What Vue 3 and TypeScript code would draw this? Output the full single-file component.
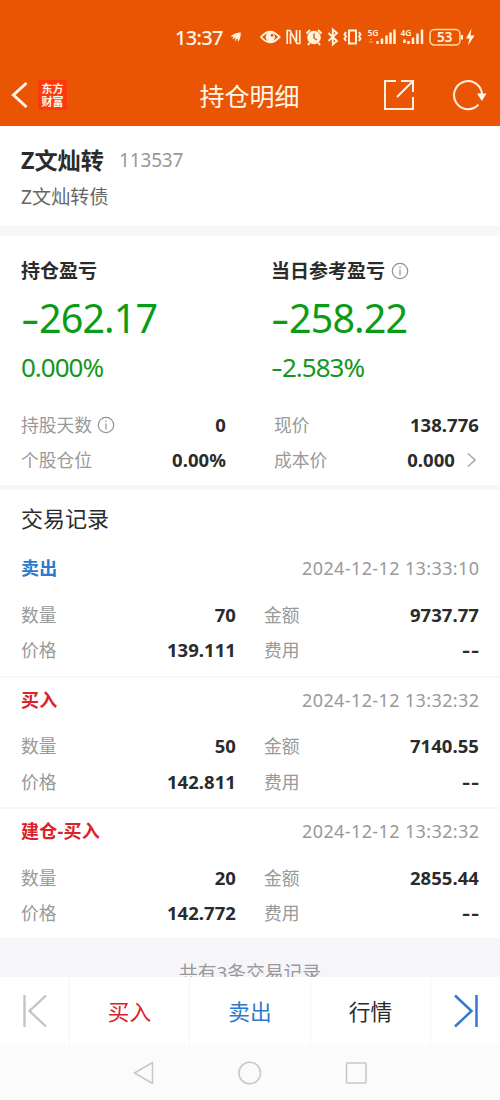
<script setup lang="ts">
interface TradeRecord {
  kind: string
  side: 'buy' | 'sell'
  time: string
  quantity: string
  amount: string
  price: string
}

const records: TradeRecord[] = [
  { kind: '卖出', side: 'sell', time: '2024-12-12 13:33:10', quantity: '70', amount: '9737.77', price: '139.111' },
  { kind: '买入', side: 'buy', time: '2024-12-12 13:32:32', quantity: '50', amount: '7140.55', price: '142.811' },
  { kind: '建仓-买入', side: 'buy', time: '2024-12-12 13:32:32', quantity: '20', amount: '2855.44', price: '142.772' },
]
</script>

<template>
  <div class="screen">
    <header class="top">
      <div class="status">
        <span class="clock">13:37</span>
        <svg class="status-icons" width="250" height="24" viewBox="230 25 250 24" fill="none" stroke="#fff3dc" stroke-width="1.6">
          <path d="M230.500 36.500Q235 32.500 240.800 32.500Q241 38 238 42L237.500 38 235 41.500 235.500 37.500 232.500 39.500 233.500 36.800Z" fill="#fff3dc" stroke="none" />
          <path d="M261 37Q270 26.500 279.500 37Q270 47.500 261 37Z" stroke-width="1.9" />
          <circle cx="270.300" cy="37" r="4.700" fill="#fff3dc" stroke="none" />
          <circle cx="272" cy="35.300" r="1.400" fill="#ea5504" stroke="none" />
          <path d="M287.200 44V30.500M290.500 44V33M296.500 30V41M299.800 30V43.500M286.300 30.500H290L297 43.500H300.500" stroke-width="1.700" />
          <circle cx="314" cy="37.500" r="6.800" fill="#fff3dc" stroke="none" />
          <path d="M306.500 33.500 310 30M321.500 33.500 318 30M309.500 43 308 45M318.500 43 320 45" stroke-width="2" />
          <path d="M314 33.500V38L317 40" stroke="#ea5504" stroke-width="1.400" />
          <path d="M328.500 33 337 41 332.800 44.500V29.500L337 33 328.500 41" stroke-width="1.900" />
          <path d="M349 30.500H356V43.500H349ZM346 32 344.500 34.500 346 36.500 344.500 38.500 346 41M359 32 360.500 34.500 359 36.500 360.500 38.500 359 41" stroke-width="2" />
          <path d="M377.500 44V41M382 44V38.500M386.500 44V35.500M390.500 44V32.500M394.500 44V29.500" stroke-width="2.500" />
          <path d="M369 42H373M370 39.500H372" stroke="#f58b4f" stroke-width="1.300" />
          <path d="M404.500 43V39.500M408.500 44V41M413 44V37.500M417.500 44V33.500M422 44V29.500" stroke-width="2.500" />
          <rect x="430" y="29.500" width="30" height="15.500" rx="4.500" stroke="#ffd9a0" stroke-width="1.500" />
          <path d="M462 35V39.500" stroke-width="2" />
          <path d="M471.500 28.500 466 38.500H469.500L468 45.500 474.500 35.500H470.500Z" fill="#fff8e8" stroke="none" />
          <g class="status-text" fill="#fff3dc" stroke="none">
            <text x="367.500" y="36" font-size="9.500" textLength="11" lengthAdjust="spacingAndGlyphs">5G</text>
            <text x="400.500" y="36" font-size="9.500" textLength="11" lengthAdjust="spacingAndGlyphs">4G</text>
            <text x="437" y="42" font-size="13.500" textLength="15.500">53</text>
          </g>
        </svg>
      </div>
      <div class="navbar">
        <svg class="back" width="18" height="28" viewBox="0 0 18 28" fill="none" stroke="#fff5e5" stroke-width="3">
          <path d="M15.500 2 2.500 14 15.500 26" />
        </svg>
        <div class="brand"><span>东方</span><span>财富</span></div>
        <h1>持仓明细</h1>
        <svg class="share" width="32" height="32" viewBox="0 0 32 32" fill="none" stroke="#fff0e4" stroke-width="2">
          <path d="M13 2H2V30H30V18M18 2H30V13M14 18 30 2" />
        </svg>
        <svg class="reload" width="36" height="32" viewBox="0 0 36 32" fill="none" stroke="#fff0e4" stroke-width="2">
          <path d="M26.500 25.500A14 14 0 1 1 30 15" />
          <path d="M25 14.500H34.500L29.900 22Z" fill="#fff8f0" stroke="none" />
        </svg>
      </div>
    </header>

    <section class="security">
      <div class="name-row"><strong>Z文灿转</strong><span>113537</span></div>
      <p>Z文灿转债</p>
    </section>

    <section class="profit">
      <div class="headline">
        <div class="pane">
          <h2>持仓盈亏</h2>
          <div class="big"><i>-</i>262.17</div>
          <div class="rate">0.000%</div>
        </div>
        <div class="pane">
          <h2>当日参考盈亏
            <svg width="18" height="18" viewBox="0 0 18 18" fill="none" stroke="#929292" stroke-width="1.200"><circle cx="9" cy="9" r="7.700" /><path d="M9 7.500V13.500M9 4.500V6" /></svg>
          </h2>
          <div class="big"><i>-</i>258.22</div>
          <div class="rate"><i>-</i>2.583%</div>
        </div>
      </div>
      <div class="metrics">
        <div class="metric"><label>持股天数
          <svg width="18" height="18" viewBox="0 0 18 18" fill="none" stroke="#929292" stroke-width="1.200"><circle cx="9" cy="9" r="7.700" /><path d="M9 7.500V13.500M9 4.500V6" /></svg>
        </label><b>0</b></div>
        <div class="metric"><label>现价</label><b>138.776</b></div>
        <div class="metric"><label>个股仓位</label><b>0.00%</b></div>
        <div class="metric"><label>成本价</label><b>0.000</b>
          <svg class="chevron" width="9" height="16" viewBox="0 0 9 16" fill="none" stroke="#aaa" stroke-width="1.600"><path d="M1 1.500 8 8 1 14.500" /></svg>
        </div>
      </div>
    </section>

    <section class="trades">
      <h3>交易记录</h3>
      <article v-for="record in records" :key="record.kind" class="trade">
        <div class="trade-head"><strong :class="record.side">{{ record.kind }}</strong><time>{{ record.time }}</time></div>
        <div class="trade-row"><label>数量</label><b>{{ record.quantity }}</b><label>金额</label><b>{{ record.amount }}</b></div>
        <div class="trade-row"><label>价格</label><b>{{ record.price }}</b><label>费用</label><b class="none"><i>-</i><i>-</i></b></div>
      </article>
    </section>

    <div class="summary">共有3条交易记录</div>

    <nav class="actions">
      <div class="side"><svg width="26" height="34" viewBox="0 0 26 34" fill="none" stroke="#c4c4c4" stroke-width="2.400"><path d="M2.500 1V33M24 1.500 7.500 17 24 32.500" /></svg></div>
      <div class="action buy">买入</div>
      <div class="action sell">卖出</div>
      <div class="action">行情</div>
      <div class="side"><svg width="26" height="34" viewBox="0 0 26 34" fill="none" stroke="#3478cf" stroke-width="2.500"><path d="M23.500 1V33M2 1.500 18.500 17 2 32.500" /></svg></div>
    </nav>

    <div class="system">
      <svg width="500" height="55" viewBox="0 0 500 55" fill="none" stroke="#c9c9c9" stroke-width="1.600" stroke-linejoin="round">
        <path d="M152.500 17.500V38.500L134.500 28Z" />
        <circle cx="249.700" cy="28" r="10.800" />
        <rect x="346.500" y="18" width="19.500" height="20" rx="1" />
      </svg>
    </div>
  </div>
</template>

<style>
body { margin: 0; }
</style>

<style scoped>
* { box-sizing: border-box; }
.screen {
  width: 500px; height: 1100px; overflow: hidden; display: flex; flex-direction: column;
  background: #fff; color: #2b2b2b;
  font-family: "Noto Sans", "Noto Sans CJK SC", sans-serif;
}
h1, h2, h3, p { margin: 0; }
i { font-style: normal; display: inline-block; }
svg { flex: none; display: block; }
.top { height: 126px; flex: none; background: #ea5504; color: #fff5e8; }
.status { height: 65px; padding: 25px 0 0 175px; display: flex; }
.clock { width: 55px; font-size: 20px; line-height: 25px; letter-spacing: -.7px; font-weight: 500; }
.status-text { font-family: "Noto Sans", sans-serif; font-weight: 600; }
.navbar { height: 60px; display: grid; grid-template-columns: 27px 40px 1fr 32px 37px 36px; align-items: center; padding: 0 12px 0 11px; }
.brand {
  width: 29px; height: 30px; background: #fa3a0c; border-radius: 2px; display: flex; flex-direction: column; align-items: center; justify-content: center;
  font: 700 11px/13px "Noto Sans CJK SC", sans-serif;
}
.navbar h1 { font-size: 25px; line-height: 36px; font-weight: 400; text-align: center; padding: 1px 0 0 38px; }
.navbar .reload { grid-column: 6; }
.security { height: 110px; flex: none; padding: 17px 21px 0; border-bottom: 10px solid #f7f7f8; }
.name-row { display: flex; align-items: center; height: 34px; gap: 15px; }
.name-row strong { font-size: 23.200px; line-height: 34px; }
.name-row span { font-size: 19px; color: #989898; letter-spacing: -.15px; }
.security p { font-size: 19px; line-height: 28px; margin-top: 6px; letter-spacing: .15px; color: #666; }
.profit { height: 254px; flex: none; border-bottom: 5px solid #f7f7f8; padding-top: 20px; }
.headline { display: grid; grid-template-columns: 250px 250px; height: 151px; }
.pane { padding-left: 21px; }
.pane h2 { font-size: 19px; line-height: 30px; font-weight: 700; display: flex; align-items: center; gap: 6px; }
.big { font-size: 39.500px; line-height: 50px; margin-top: 7px; letter-spacing: -.9px; color: #0b9c16; white-space: nowrap; }
.big i { width: 18px; transform: scaleX(1.45); transform-origin: 0 50%; }
.rate { font-size: 26px; line-height: 34px; margin-top: 7px; letter-spacing: -1px; color: #159620; }
.rate i { width: 11px; transform: scaleX(1.4); transform-origin: 0 50%; }
.metrics { display: grid; grid-template-columns: 205px 205px; column-gap: 48px; padding-left: 21px; }
.metric { display: flex; align-items: center; height: 35px; }
.metric label { display: flex; align-items: center; gap: 5px; }
label { font-size: 17.800px; line-height: 28px; color: #999; white-space: nowrap; }
b { font-size: 18.500px; line-height: 28px; font-weight: 700; letter-spacing: .05px; }
.metric b { margin-left: auto; }
.chevron { margin: 0 3px 0 12px; }
.trades { height: 448px; flex: none; }
.trades h3 { height: 56px; padding: 0 21px; font-size: 22px; line-height: 57px; font-weight: 400; }
.trade { height: 131.500px; border-bottom: 2px solid #f7f7f8; padding: 7px 21px 0; }
.trade:last-child { border: 0; height: 129px; }
.trade-head { display: flex; justify-content: space-between; align-items: center; height: 30px; margin-bottom: 14px; }
.trade-head strong { font-size: 18px; line-height: 28px; letter-spacing: .25px; }
time { font-size: 18px; line-height: 28px; color: #999; letter-spacing: .38px; margin-right: -.38px; }
.buy { color: #d9222a; }
.sell { color: #2c78cc; }
.trade-row { display: grid; grid-template-columns: 75px 140px 75px 1fr; height: 35.500px; align-items: center; }
.trade-row b { text-align: right; }
.trade-row label:nth-of-type(2) { padding-left: 28px; }
.none i { width: 9px; transform: scaleX(1.3); transform-origin: 100% 50%; }
.summary { height: 39px; flex: none; background: #f6f6fa; overflow: hidden; text-align: center; color: #999; font-size: 18.800px; line-height: 28px; padding-top: 21px; }
.actions { height: 68px; flex: none; display: grid; grid-template-columns: 69px 120px 121px 120px 70px; }
.actions > div { display: flex; align-items: center; justify-content: center; font-size: 21.700px; line-height: 30px; }
.actions .action { padding-top: 1px; }
.actions > div + div { border-left: 1px solid #f6f6f6; }
.system { height: 55px; flex: none; background: #fbfbfb; }
</style>
